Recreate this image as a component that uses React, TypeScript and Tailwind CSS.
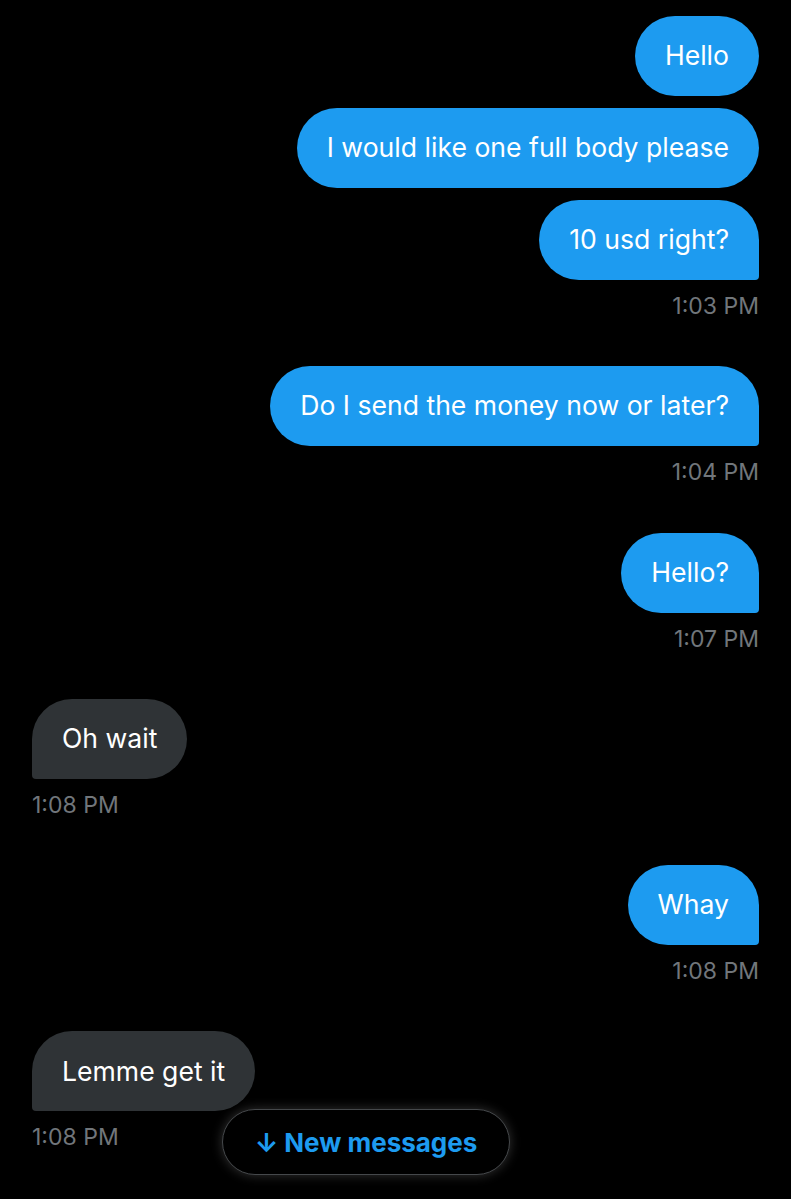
import React from 'react';

type Msg = { text: string; mine: boolean };
type Group = { msgs: string[]; mine: boolean; time: string };

const GROUPS: Group[] = [
    { msgs: ['Hello', 'I would like one full body please', '10 usd right?'], mine: true, time: '1:03 PM' },
    { msgs: ['Do I send the money now or later?'], mine: true, time: '1:04 PM' },
    { msgs: ['Hello?'], mine: true, time: '1:07 PM' },
    { msgs: ['Oh wait'], mine: false, time: '1:08 PM' },
    { msgs: ['Whay'], mine: true, time: '1:08 PM' },
    { msgs: ['Lemme get it'], mine: false, time: '1:08 PM' },
];

function Bubble({ text, mine, last }: Msg & { last: boolean }) {
    const corner = last ? (mine ? 'rounded-br-[4px]' : 'rounded-bl-[4px]') : '';
    return (
        <div
            className={`h-[80px] flex items-center px-[30px] rounded-[40px] text-[26.6px] text-white ${corner} ${
                mine ? 'bg-[#1d9bf0]' : 'bg-[#2f3336]'
            }`}
        >
            {text}
        </div>
    );
}

export default function App() {
    return (
        <div
            className="relative w-[791px] h-[1199px] bg-black overflow-hidden"
            style={{ fontFamily: 'Inter, "Noto Sans", sans-serif' }}
        >
            <div className="flex flex-col gap-[46.3px] pt-[16px] px-[32px]">
                {GROUPS.map((g, i) => (
                    <div key={i} className={`flex flex-col ${g.mine ? 'items-end' : 'items-start'}`}>
                        <div className={`flex flex-col gap-[12px] ${g.mine ? 'items-end' : 'items-start'}`}>
                            {g.msgs.map((m, j) => (
                                <Bubble key={j} text={m} mine={g.mine} last={j === g.msgs.length - 1} />
                            ))}
                        </div>
                        <div className="mt-[12px] h-[28px] leading-[28px] text-[23px] text-[#71767b]">{g.time}</div>
                    </div>
                ))}
            </div>

            {/* floating jump-to-new pill */}
            <div className="absolute left-[222px] top-[1109px] w-[288px] h-[66px] rounded-full bg-black border border-[#45484b] shadow-[0_0_12px_rgba(255,255,255,0.2)] flex items-center justify-center gap-[6px] text-[#1d9bf0] text-[26px] font-bold">
                <span>↓</span>
                <span>New messages</span>
            </div>
        </div>
    );
}
